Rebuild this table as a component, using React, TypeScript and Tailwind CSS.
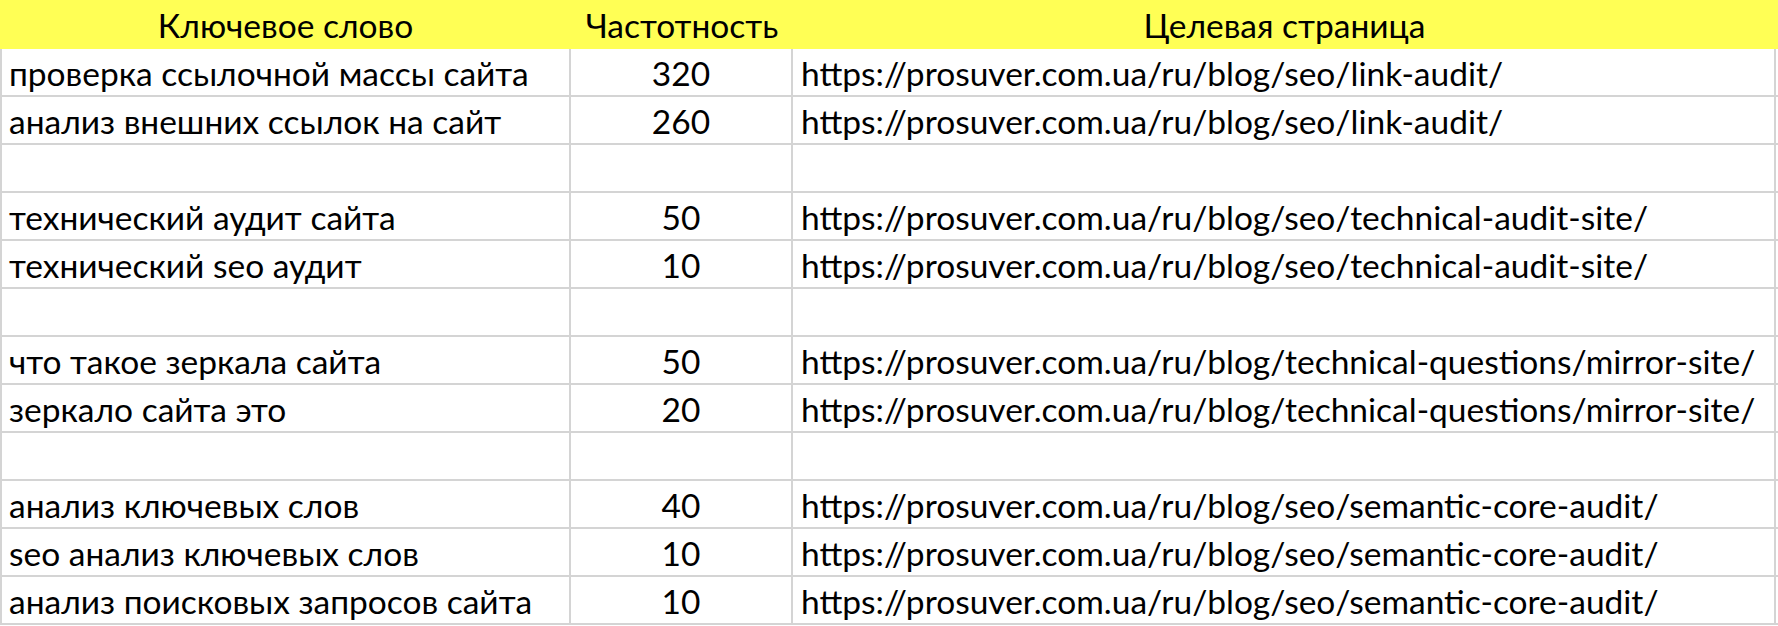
type Row = { keyword: string; freq: string; url: string };

const rows: Row[] = [
  { keyword: "проверка ссылочной массы сайта", freq: "320", url: "https://prosuver.com.ua/ru/blog/seo/link-audit/" },
  { keyword: "анализ внешних ссылок на сайт", freq: "260", url: "https://prosuver.com.ua/ru/blog/seo/link-audit/" },
  { keyword: "", freq: "", url: "" },
  { keyword: "технический аудит сайта", freq: "50", url: "https://prosuver.com.ua/ru/blog/seo/technical-audit-site/" },
  { keyword: "технический seo аудит", freq: "10", url: "https://prosuver.com.ua/ru/blog/seo/technical-audit-site/" },
  { keyword: "", freq: "", url: "" },
  { keyword: "что такое зеркала сайта", freq: "50", url: "https://prosuver.com.ua/ru/blog/technical-questions/mirror-site/" },
  { keyword: "зеркало сайта это", freq: "20", url: "https://prosuver.com.ua/ru/blog/technical-questions/mirror-site/" },
  { keyword: "", freq: "", url: "" },
  { keyword: "анализ ключевых слов", freq: "40", url: "https://prosuver.com.ua/ru/blog/seo/semantic-core-audit/" },
  { keyword: "seo анализ ключевых слов", freq: "10", url: "https://prosuver.com.ua/ru/blog/seo/semantic-core-audit/" },
  { keyword: "анализ поисковых запросов сайта", freq: "10", url: "https://prosuver.com.ua/ru/blog/seo/semantic-core-audit/" },
];

export default function App() {
  return (
    <div
      className="w-[1778px] h-[626px] overflow-hidden bg-white text-black text-[33.5px] leading-none"
      style={{ fontFamily: "Lato, 'Open Sans', sans-serif" }}
    >
      <div className="grid grid-cols-[571px_222px_983px] h-[49px] bg-[#ffff55]">
        <div className="flex items-center justify-center pt-[2px]">Ключевое слово</div>
        <div className="flex items-center justify-center pt-[2px]">Частотность</div>
        <div className="flex items-center justify-center pt-[2px]">Целевая страница</div>
      </div>
      {rows.map((row, i) => (
        <div key={i} className="grid grid-cols-[571px_222px_983px] h-[48px] border-b-2 border-[#d4d4d4]">
          <div className="flex items-center whitespace-nowrap border-x-2 border-[#d4d4d4] pl-[7px] pt-[3px]">
            {row.keyword}
          </div>
          <div className="flex items-center justify-center border-r-2 border-[#d4d4d4] pt-[3px]">{row.freq}</div>
          <div className="flex items-center whitespace-nowrap border-r-2 border-[#d4d4d4] pl-[8px] pt-[3px]">
            {row.url}
          </div>
        </div>
      ))}
    </div>
  );
}
